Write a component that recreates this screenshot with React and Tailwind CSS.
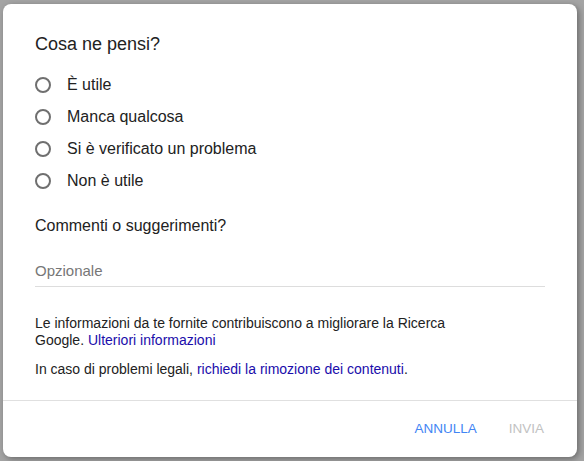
import React, { useState } from "react";

const OPTIONS = ["È utile", "Manca qualcosa", "Si è verificato un problema", "Non è utile"];

const FeedbackDialog = () => {
  const [choice, setChoice] = useState(null);
  const [comment, setComment] = useState("");

  return (
    <div className="min-h-[461px] w-[584px] bg-[#a4a4a4] pt-[4px] pl-[3px] font-['Liberation_Sans',Arial,sans-serif]">
      <div className="w-[574px] h-[453px] bg-white rounded-[8px] shadow-[2px_2px_6px_rgba(0,0,0,0.35)] flex flex-col">
        {/* Body */}
        <div className="px-[32px] pt-[28px] flex flex-col">
          <h2 className="text-[18px] leading-6 text-[#222]">Cosa ne pensi?</h2>

          {/* Options */}
          <div className="mt-[13px] flex flex-col">
            {OPTIONS.map((opt) => (
              <label key={opt} className="h-8 flex items-center cursor-pointer">
                <span className="w-[16px] h-[16px] rounded-full border-2 border-[#6f6f6f] flex items-center justify-center">
                  {choice === opt && <span className="w-2 h-2 rounded-full bg-[#4285f4]" />}
                </span>
                <input
                  type="radio"
                  name="feedback"
                  className="sr-only"
                  checked={choice === opt}
                  onChange={() => setChoice(opt)}
                />
                <span className="ml-[16px] text-[16px] text-[#222]">{opt}</span>
              </label>
            ))}
          </div>

          {/* Comments */}
          <div className="mt-[17px] text-[16px] leading-6 text-[#222]">Commenti o suggerimenti?</div>
          <input
            type="text"
            value={comment}
            onChange={(e) => setComment(e.target.value)}
            placeholder="Opzionale"
            className="mt-[16px] h-[33px] w-full border-b border-[#dddddd] text-[15px] text-[#222] placeholder:text-[#777] outline-none"
          />

          <p className="mt-[28px] text-[14px] leading-[17px] text-[#222] pr-[80px]">
            Le informazioni da te fornite contribuiscono a migliorare la Ricerca Google.{" "}
            <a href="#" className="text-[#1a0dab]">Ulteriori informazioni</a>
          </p>
          <p className="mt-[12px] text-[14px] leading-[17px] text-[#222]">
            In caso di problemi legali,{" "}
            <a href="#" className="text-[#1a0dab]">richiedi la rimozione dei contenuti</a>.
          </p>
        </div>

        {/* Footer */}
        <div className="mt-[22px] border-t border-[#e0e0e0] flex-1 flex items-center justify-end pr-[33px] gap-[32px]">
          <button type="button" className="text-[13.5px] text-[#4285f4]">ANNULLA</button>
          <button type="button" disabled className="text-[13.5px] text-[#c2c2c2]">INVIA</button>
        </div>
      </div>
    </div>
  );
};

export default function App() {
  return <FeedbackDialog />;
}
